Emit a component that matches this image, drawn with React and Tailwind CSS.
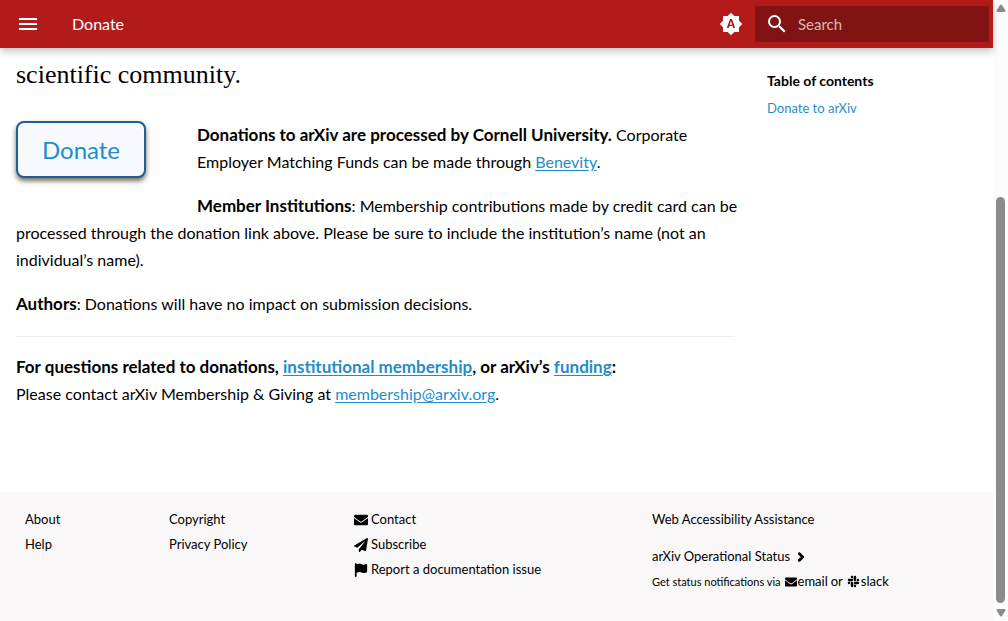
import React from "react";
import {
  FaEnvelope,
  FaPaperPlane,
  FaChevronRight,
  FaSlack,
} from "react-icons/fa";
import { FaFlag } from "react-icons/fa6";

const linkClass = "text-[#1f8dc9] underline underline-offset-2";

function Icon({ d }) {
  return (
    <svg viewBox="0 0 24 24" className="size-6 fill-current" aria-hidden="true">
      <path d={d} />
    </svg>
  );
}

const menuPath = "M3 6h18v2H3V6m0 5h18v2H3v-2m0 5h18v2H3v-2Z";
const brightnessPath =
  "m14.3 16-.7-2h-3.2l-.7 2H7.8L11 7h2l3.2 9h-1.9M20 8.69V4h-4.69L12 .69 8.69 4H4v4.69L.69 12 4 15.31V20h4.69L12 23.31 15.31 20H20v-4.69L23.31 12 20 8.69m-9.15 3.96h2.3L12 9l-1.15 3.65Z";
const searchPath =
  "M9.5 3A6.5 6.5 0 0 1 16 9.5c0 1.61-.59 3.09-1.56 4.23l.27.27h.79l5 5-1.5 1.5-5-5v-.79l-.27-.27A6.516 6.516 0 0 1 9.5 16 6.5 6.5 0 0 1 3 9.5 6.5 6.5 0 0 1 9.5 3m0 2C7 5 5 7 5 9.5S7 14 9.5 14 14 12 14 9.5 12 5 9.5 5Z";

function Header() {
  return (
    <header className="sticky top-0 z-10 flex h-12 items-center bg-[#b31b1b] pr-1 text-white shadow-[0_0_4px_rgba(0,0,0,0.1),0_4px_8px_rgba(0,0,0,0.2)]">
      <button type="button" aria-label="Menu" className="ml-4">
        <Icon d={menuPath} />
      </button>
      <span className="ml-8 flex-1 text-base">Donate</span>
      <button type="button" aria-label="Switch colour mode" className="mr-3">
        <Icon d={brightnessPath} />
      </button>
      <label className="flex h-9 w-[234px] items-center gap-2 rounded-xs bg-[#811413] pl-[10px]">
        <Icon d={searchPath} />
        <input
          type="search"
          aria-label="Search"
          placeholder="Search"
          className="min-w-0 flex-1 bg-transparent pl-[1px] text-[15px] outline-none placeholder:text-white/70"
        />
      </label>
    </header>
  );
}

function Strong({ children }) {
  return <strong className="text-[17px]">{children}</strong>;
}

function Article() {
  return (
    <article className="min-w-0 flex-1 px-4 text-base leading-[27px]">
      <h2 className="pt-2 pb-7 font-['Liberation_Serif',serif] text-[26px] leading-[37px]">
        scientific community.
      </h2>
      <a
        href="#donate"
        className="float-left mr-[51px] mb-8 flex h-[57px] w-[130px] items-center justify-center rounded-lg border-2 border-[#1f5e96] bg-[#f6fafe] text-2xl text-[#1f8dc9] shadow-[0_3px_5px_rgba(60,50,30,0.7)]"
      >
        Donate
      </a>
      <p>
        <Strong>Donations to arXiv are processed by Cornell University.</Strong>{" "}
        Corporate
        <br />
        Employer Matching Funds can be made through{" "}
        <a href="#benevity" className={linkClass}>
          Benevity
        </a>
        .
      </p>
      <p className="mt-[17px] whitespace-nowrap">
        <Strong>Member Institutions</Strong>: Membership contributions made by
        credit card can be
        <br />
        processed through the donation link above. Please be sure to include the
        institution’s name (not an
        <br />
        individual’s name).
      </p>
      <p className="mt-[17px]">
        <Strong>Authors</Strong>: Donations will have no impact on submission
        decisions.
      </p>
      <hr className="mt-[19px] mb-4 border-[#ededed]" />
      <p>
        <Strong>
          For questions related to donations,{" "}
          <a href="#institutional" className={linkClass}>
            institutional membership
          </a>
          , or arXiv’s{" "}
          <a href="#funding" className={linkClass}>
            funding
          </a>
          :
        </Strong>
        <br />
        Please contact arXiv Membership &amp; Giving at{" "}
        <a href="mailto:membership@arxiv.org" className={linkClass}>
          membership@arxiv.org
        </a>
        .
      </p>
    </article>
  );
}

function Contents() {
  return (
    <nav className="w-[242px] px-4 pt-6 text-[13px] leading-[18px]">
      <h2 className="text-sm leading-[18px] font-bold">Table of contents</h2>
      <ul className="mt-[9px]">
        <li>
          <a href="#donate-to-arxiv" className="text-[#1f8dc9]">
            Donate to arXiv
          </a>
        </li>
      </ul>
    </nav>
  );
}

function FooterLink({ icon, children }) {
  return (
    <li className="flex">
      <a href="#footer" className="flex items-center gap-[3px]">
        {icon}
        {children}
      </a>
    </li>
  );
}

function Footer() {
  return (
    <footer className="grid grid-cols-[144fr_185fr_298fr_316fr] bg-[#f9f7f8] px-[25px] pt-[15px] pb-[27px] text-[13px] leading-[25px]">
      <ul>
        <FooterLink>About</FooterLink>
        <FooterLink>Help</FooterLink>
      </ul>
      <ul>
        <FooterLink>Copyright</FooterLink>
        <FooterLink>Privacy Policy</FooterLink>
      </ul>
      <ul>
        <FooterLink icon={<FaEnvelope className="size-[14px]" />}>Contact</FooterLink>
        <FooterLink icon={<FaPaperPlane className="size-[14px]" />}>Subscribe</FooterLink>
        <FooterLink icon={<FaFlag className="size-[14px]" />}>
          Report a documentation issue
        </FooterLink>
      </ul>
      <div>
        <a href="#accessibility">Web Accessibility Assistance</a>
        <p className="mt-3 flex">
          <a href="#status" className="flex items-center gap-[6px]">
            arXiv Operational Status
            <FaChevronRight className="size-[10px] stroke-current stroke-[60]" />
          </a>
        </p>
        <p className="flex items-center gap-1">
          <span className="text-[11px]">Get status notifications via</span>
          <span className="flex items-center gap-[3px]">
            <a href="#email" className="flex items-center gap-[1px]">
              <FaEnvelope className="size-3" />
              email
            </a>
            or
          </span>
          <a href="#slack" className="flex items-center gap-[1px]">
            <FaSlack className="size-[13px]" />
            slack
          </a>
        </p>
      </div>
    </footer>
  );
}

function ScrollTrack() {
  return (
    <div
      aria-hidden="true"
      className="sticky top-0 flex h-screen w-[15px] flex-col items-center bg-[#fcfcfc] py-1"
    >
      <svg viewBox="0 0 10 8" className="h-2 w-[10px] fill-[#8b8b8b]">
        <path d="M4.2.8Q5 0 5.800.8L9.300 6.200Q9.800 7.800 8.500 8H1.500Q.2 7.800.7 6.200Z" />
      </svg>
      <div className="flex w-full flex-1 flex-col items-center pt-[185px] pb-[6px]">
        <div className="w-[9px] flex-1 rounded-full bg-[#8b8b8b]" />
      </div>
      <svg viewBox="0 0 10 8" className="h-2 w-[10px] fill-[#8b8b8b]">
        <path d="M4.200 7.200Q5 8 5.800 7.200L9.300 1.800Q9.800.2 8.500 0H1.500Q.2.2.7 1.800Z" />
      </svg>
    </div>
  );
}

export default function App() {
  return (
    <div className="flex items-start bg-white font-[Lato,sans-serif] text-black">
      <div className="flex min-h-screen min-w-0 flex-1 flex-col">
        <Header />
        <main className="flex flex-1 pb-16">
          <Article />
          <Contents />
        </main>
        <Footer />
      </div>
      <ScrollTrack />
    </div>
  );
}
